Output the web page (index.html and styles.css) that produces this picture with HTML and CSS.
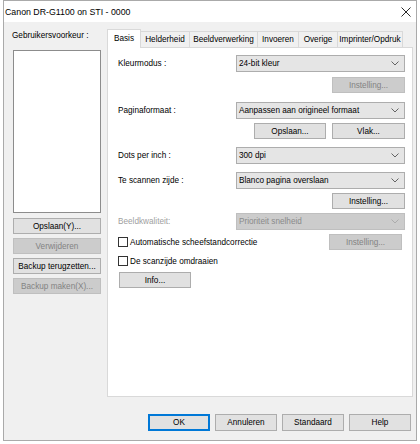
FILE: index.html
```html
<!DOCTYPE html>
<html>
<head>
<meta charset="utf-8">
<link rel="stylesheet" href="styles.css">
</head>
<body>
<div class="window">
  <div class="titlebar">
    <span class="title">Canon DR-G1100 on STI - 0000</span>
    <span class="close"><svg width="10" height="10" viewBox="0 0 10 10"><path d="M0.5 0.5 L9.5 9.5 M9.5 0.5 L0.5 9.5" stroke="#111" stroke-width="0.9" fill="none"/></svg></span>
  </div>
  <div class="client">
    <div class="main">
      <div class="side">
        <div class="side-label">Gebruikersvoorkeur :</div>
        <div class="listbox"></div>
        <div class="btn side-btn">Opslaan(Y)...</div>
        <div class="btn side-btn disabled">Verwijderen</div>
        <div class="btn side-btn">Backup terugzetten...</div>
        <div class="btn side-btn disabled">Backup maken(X)...</div>
      </div>
      <div class="tabctl">
        <div class="tabstrip">
          <div class="tab selected w-basis">Basis</div>
          <div class="tab w-held">Helderheid</div>
          <div class="tab w-beeld">Beeldverwerking</div>
          <div class="tab w-inv">Invoeren</div>
          <div class="tab w-ov">Overige</div>
          <div class="tab w-imp">Imprinter/Opdruk</div>
        </div>
        <div class="panel">
          <div class="row r1">
            <div class="lbl">Kleurmodus :</div>
            <div class="combo"><span>24-bit kleur</span><svg class="chev" width="8" height="5" viewBox="0 0 8 5"><path d="M0.5 0.5 L4 4 L7.5 0.5" stroke="#555" stroke-width="0.9" fill="none"/></svg></div>
          </div>
          <div class="btnrow r2">
            <div class="btn w73 disabled">Instelling...</div>
          </div>
          <div class="row r3">
            <div class="lbl">Paginaformaat :</div>
            <div class="combo"><span>Aanpassen aan origineel formaat</span><svg class="chev" width="8" height="5" viewBox="0 0 8 5"><path d="M0.5 0.5 L4 4 L7.5 0.5" stroke="#555" stroke-width="0.9" fill="none"/></svg></div>
          </div>
          <div class="btnrow r4">
            <div class="btn w72">Opslaan...</div>
            <div class="btn w73">Vlak...</div>
          </div>
          <div class="row r5">
            <div class="lbl">Dots per inch :</div>
            <div class="combo"><span>300 dpi</span><svg class="chev" width="8" height="5" viewBox="0 0 8 5"><path d="M0.5 0.5 L4 4 L7.5 0.5" stroke="#555" stroke-width="0.9" fill="none"/></svg></div>
          </div>
          <div class="row r6">
            <div class="lbl">Te scannen zijde :</div>
            <div class="combo"><span>Blanco pagina overslaan</span><svg class="chev" width="8" height="5" viewBox="0 0 8 5"><path d="M0.5 0.5 L4 4 L7.5 0.5" stroke="#555" stroke-width="0.9" fill="none"/></svg></div>
          </div>
          <div class="btnrow r7">
            <div class="btn w73">Instelling...</div>
          </div>
          <div class="row r8">
            <div class="lbl dis-text">Beeldkwaliteit:</div>
            <div class="combo disabled"><span>Prioriteit snelheid</span><svg class="chev" width="8" height="5" viewBox="0 0 8 5"><path d="M0.5 0.5 L4 4 L7.5 0.5" stroke="#a8a8a8" stroke-width="0.9" fill="none"/></svg></div>
          </div>
          <div class="checkrow r9">
            <div class="check"></div>
            <div class="checklbl">Automatische scheefstandcorrectie</div>
            <div class="btn w73 disabled push">Instelling...</div>
          </div>
          <div class="checkrow r10">
            <div class="check"></div>
            <div class="checklbl">De scanzijde omdraaien</div>
          </div>
          <div class="inforow r11">
            <div class="btn w72 info">Info...</div>
          </div>
        </div>
      </div>
    </div>
    <div class="footer">
      <div class="btn fbtn default">OK</div>
      <div class="btn fbtn">Annuleren</div>
      <div class="btn fbtn">Standaard</div>
      <div class="btn fbtn">Help</div>
    </div>
  </div>
</div>
</body>
</html>
```

FILE: styles.css
```css
* { box-sizing: border-box; }
html, body { margin: 0; padding: 0; background: #ffffff; }
body {
  font-family: "Liberation Sans", Arial, sans-serif;
  font-size: 8.2px;
  color: #000;
}
.window {
  margin-left: 3px;
  width: 414px;
  height: 441px;
  border: 1px solid #aaaaaa;
  display: flex;
  flex-direction: column;
}
.titlebar {
  height: 21px;
  flex: none;
  background: #fff;
  display: flex;
  align-items: center;
  justify-content: space-between;
  padding-left: 1px;
}
.title { font-size: 8.8px; }
.close {
  width: 20px;
  height: 21px;
  display: flex;
  align-items: center;
  justify-content: center;
}
.client {
  flex: 1;
  background: #f0f0f0;
  padding: 7px 2px 0 9px;
  display: flex;
  flex-direction: column;
}
.main { display: flex; gap: 6px; }
.side { width: 88px; display: flex; flex-direction: column; }
.side-label { height: 14px; line-height: 14px; margin-left: -1px; white-space: nowrap; }
.listbox {
  margin-top: 7px;
  height: 163px;
  background: #fff;
  border: 1px solid #8c8c8c;
}
.btn {
  height: 16px;
  background: #e1e1e1;
  border: 1px solid #adadad;
  display: flex;
  align-items: center;
  justify-content: center;
  white-space: nowrap;
}
.btn.disabled {
  background: #cccccc;
  border-color: #bfbfbf;
  color: #838383;
}
.side-btn { margin-top: 4px; }
.listbox + .side-btn { margin-top: 5px; }

.tabctl { width: 306px; display: flex; flex-direction: column; }
.tabstrip { height: 18px; display: flex; align-items: flex-end; }
.tab {
  height: 16px;
  border: 1px solid #d9d9d9;
  border-bottom: none;
  background: #f0f0f0;
  margin-left: -1px;
  display: flex;
  align-items: center;
  justify-content: center;
  white-space: nowrap;
}
.tab.selected {
  margin-left: 0;
  height: 19px;
  margin-bottom: -1px;
  background: #fff;
  position: relative;
  z-index: 1;
  padding-bottom: 2px;
}
.w-basis { width: 34px; }
.w-held { width: 50px; }
.w-beeld { width: 69px; }
.w-inv { width: 42px; }
.w-ov { width: 40px; }
.w-imp { width: 66px; }

.panel {
  height: 350px;
  background: #fff;
  border: 1px solid #d9d9d9;
  padding: 0 7px 0 10px;
  display: flex;
  flex-direction: column;
}
.row { display: flex; align-items: center; height: 17px; }
.lbl { width: 118px; white-space: nowrap; }
.dis-text { color: #a0a0a0; }
.combo {
  width: 169px;
  height: 17px;
  background: #e5e5e5;
  border: 1px solid #adadad;
  display: flex;
  align-items: center;
  justify-content: space-between;
  padding: 0 5px 0 2px;
  white-space: nowrap;
}
.combo.disabled {
  background: #cccccc;
  border-color: #bfbfbf;
  color: #8a8a8a;
}
.btnrow { display: flex; justify-content: flex-end; gap: 6px; height: 16px; }
.w73 { width: 73px; }
.w72 { width: 72px; }
.checkrow { display: flex; align-items: center; height: 16px; }
.check {
  width: 10px;
  height: 10px;
  background: #fff;
  border: 1px solid #333;
}
.checklbl { margin-left: 2px; }
.push { margin-left: auto; margin-right: 3px; }
.inforow { display: flex; height: 16px; }
.info { margin-left: 1px; }

.r1 { margin-top: 7px; }
.r2 { margin-top: 5px; }
.r3 { margin-top: 9px; }
.r4 { margin-top: 4px; }
.r5 { margin-top: 8px; }
.r6 { margin-top: 8px; }
.r7 { margin-top: 4px; }
.r8 { margin-top: 4px; }
.r9 { margin-top: 4px; }
.r10 { margin-top: 3px; }
.r11 { margin-top: 3px; }

.footer {
  margin-top: 17px;
  display: flex;
  justify-content: flex-end;
  gap: 5px;
  padding-right: 3px;
}
.fbtn { width: 62px; height: 17px; }
.fbtn.default {
  border-color: #0078d7;
  box-shadow: inset 0 0 0 1px #0078d7;
}
```
